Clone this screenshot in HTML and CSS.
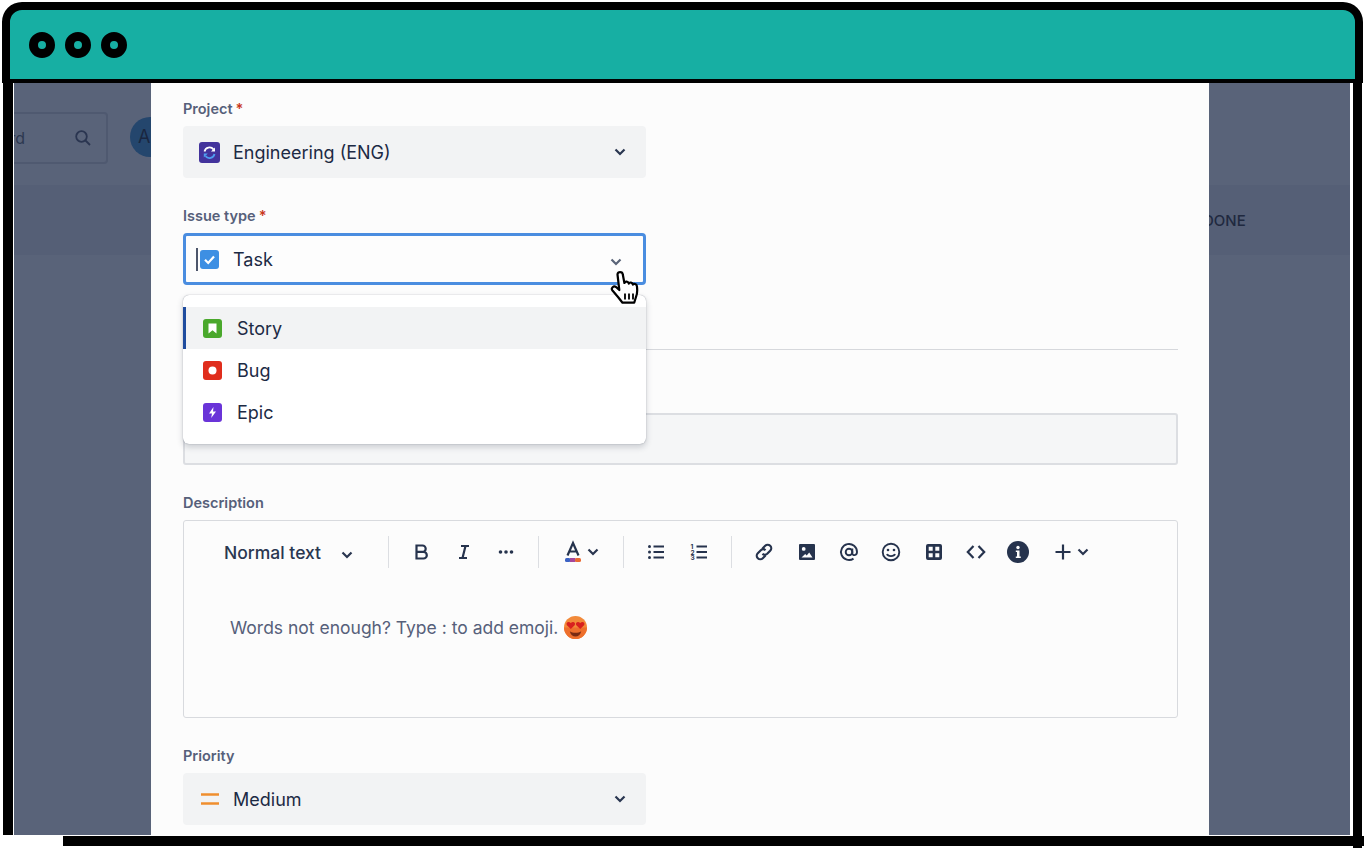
FILE: index.html
```html
<!DOCTYPE html>
<html lang="en">
<head>
<meta charset="utf-8">
<title>Create issue</title>
<link rel="stylesheet" href="styles.css">
</head>
<body>
<div class="window">
  <header class="titlebar">
    <span class="dot"></span><span class="dot"></span><span class="dot"></span>
  </header>
  <div class="stage">
    <aside class="backdrop backdrop-left">
      <div class="topbar">
        <div class="search">
          <span class="search-text">Search board</span>
          <svg class="search-icon" viewBox="0 0 18 18"><circle cx="7.5" cy="7.5" r="5.3"/><path d="M11.5 11.5 16 16"/></svg>
        </div>
        <div class="avatar">A</div>
      </div>
      <div class="band"></div>
    </aside>
    <main class="modal">
      <section class="field">
        <div class="label">Project<span class="req">*</span></div>
        <div class="select">
          <svg class="ico" viewBox="0 0 21 21"><rect width="21" height="21" rx="3" fill="#43339c"/><path d="M5.5 9.5a5.2 5.2 0 0 1 9-2.2" fill="none" stroke="#fff" stroke-width="1.8"/><path d="M16 5.5v4h-4z" fill="#fff"/><path d="M15.5 12a5.2 5.2 0 0 1-9 2.2" fill="none" stroke="#4f9df0" stroke-width="1.8"/><path d="M4.8 15.5v-4h4z" fill="#4f9df0"/></svg>
          <span class="value">Engineering (ENG)</span>
          <svg class="chev" viewBox="0 0 12 8"><path d="M1.5 1.5 6 6l4.500-4.500"/></svg>
        </div>
      </section>
      <section class="field field-issue">
        <div class="label">Issue type<span class="req">*</span></div>
        <div class="select select-focus">
          <span class="caret"></span>
          <svg class="ico ico-task" viewBox="0 0 19 19"><rect width="19" height="19" rx="3" fill="#3d8fe3"/><path d="M5 9.800 8.200 13 14 6.500" fill="none" stroke="#fff" stroke-width="2.200"/></svg>
          <span class="value">Task</span>
          <svg class="chev chev-soft" viewBox="0 0 12 8"><path d="M1.5 1.5 6 6l4.500-4.500"/></svg>
        </div>
        <div class="menu">
          <div class="menu-item menu-item-active">
            <svg class="menu-ico" viewBox="0 0 19 19"><rect width="19" height="19" rx="3" fill="#4aa82c"/><path d="M5.500 4.500h8v10l-4-3.200-4 3.200z" fill="#fff"/></svg>
            <span>Story</span>
          </div>
          <div class="menu-item">
            <svg class="menu-ico" viewBox="0 0 19 19"><rect width="19" height="19" rx="3" fill="#e02d1c"/><circle cx="9.500" cy="9.500" r="4" fill="#fff"/></svg>
            <span>Bug</span>
          </div>
          <div class="menu-item">
            <svg class="menu-ico" viewBox="0 0 19 19"><rect width="19" height="19" rx="3" fill="#6a34d8"/><path d="M10.500 4 6 10.500h3L8.200 15l4.800-6.500h-3z" fill="#fff"/></svg>
            <span>Epic</span>
          </div>
        </div>
      </section>
      <div class="divider"></div>
      <section class="field field-summary">
        <div class="label">Summary</div>
        <div class="textbox"></div>
      </section>
      <section class="field field-desc">
        <div class="label">Description</div>
        <div class="editor">
          <div class="toolbar">
            <div class="tb-style"><span>Normal text</span>
              <svg class="chev chev-dark" viewBox="0 0 12 8"><path d="M1.500 1.500 6 6l4.500-4.500"/></svg>
            </div>
            <span class="sep"></span>
            <div class="tb"><svg viewBox="0 0 20 20"><path class="s" d="M5.500 3.500h6a3.200 3.200 0 0 1 0 6.400h-6zM5.500 9.900h7a3.300 3.300 0 0 1 0 6.600h-7z"/></svg></div>
            <div class="tb"><svg viewBox="0 0 20 20"><path class="s" d="M7 4h8M5 16h8M11.500 4 8.500 16"/></svg></div>
            <div class="tb"><svg viewBox="0 0 20 20"><circle class="f" cx="4.500" cy="10" r="1.800"/><circle class="f" cx="10" cy="10" r="1.800"/><circle class="f" cx="15.500" cy="10" r="1.800"/></svg></div>
            <span class="sep"></span>
            <div class="tb tb-wide">
              <svg viewBox="0 0 20 24"><path class="s" d="M4.500 15.500 10 3l5.500 12.500M6.500 11.500h7"/><rect x="2" y="18" width="5.500" height="4" rx="1.500" fill="#3c62c4"/><rect x="7" y="18" width="5.500" height="4" fill="#a5479b"/><rect x="12" y="18" width="6" height="4" rx="1.500" fill="#ea6a33"/></svg>
              <svg class="chev chev-dark" viewBox="0 0 12 8"><path d="M1.500 1.500 6 6l4.500-4.500"/></svg>
            </div>
            <span class="sep"></span>
            <div class="tb"><svg viewBox="0 0 20 20"><circle class="f" cx="3.500" cy="4.500" r="1.500"/><circle class="f" cx="3.500" cy="10" r="1.500"/><circle class="f" cx="3.500" cy="15.500" r="1.500"/><path class="s" d="M7.500 4.500H18M7.500 10H18M7.500 15.500H18"/></svg></div>
            <div class="tb"><svg viewBox="0 0 20 20"><text x="1.500" y="7" class="n">1</text><text x="1.500" y="12.500" class="n">2</text><text x="1.500" y="18" class="n">3</text><path class="s" d="M7.500 4.500H18M7.500 10H18M7.500 15.500H18"/></svg></div>
            <span class="sep"></span>
            <div class="tb"><svg viewBox="0 0 20 20"><path class="s" d="M8.500 6.500 11.200 3.800a3.400 3.400 0 0 1 5 5l-3 3a3.400 3.400 0 0 1-4.700 0M11.500 13.500 8.800 16.200a3.400 3.400 0 0 1-5-5l3-3a3.400 3.400 0 0 1 4.700 0"/></svg></div>
            <div class="tb"><svg viewBox="0 0 20 20"><path class="f" fill-rule="evenodd" d="M3 2h14a1 1 0 0 1 1 1v14a1 1 0 0 1-1 1H3a1 1 0 0 1-1-1V3a1 1 0 0 1 1-1zM4.500 15.500h11l-3.300-5-2.500 3-1.500-1.500zM6.700 5a1.900 1.900 0 1 0 0 3.800 1.900 1.900 0 0 0 0-3.800z"/></svg></div>
            <div class="tb"><svg viewBox="0 0 20 20"><circle class="s2" cx="10" cy="10" r="3.300"/><path class="s2" d="M13.300 6.500v4.800c0 2.700 4.700 2.500 4.700-1.300a8 8 0 1 0-3.500 6.600"/></svg></div>
            <div class="tb"><svg viewBox="0 0 20 20"><circle class="s2" cx="10" cy="10" r="8.300"/><circle class="f" cx="7" cy="8" r="1.300"/><circle class="f" cx="13" cy="8" r="1.300"/><path class="s2" d="M6 12c1 2.800 7 2.800 8 0"/></svg></div>
            <div class="tb"><svg viewBox="0 0 20 20"><path class="f" fill-rule="evenodd" d="M4 2h12a2 2 0 0 1 2 2v12a2 2 0 0 1-2 2H4a2 2 0 0 1-2-2V4a2 2 0 0 1 2-2zM4.700 4.700v4h4v-4zM11.300 4.700v4h4v-4zM4.700 11.300v4h4v-4zM11.300 11.300v4h4v-4z"/></svg></div>
            <div class="tb"><svg viewBox="0 0 20 20"><path class="s" d="M7.500 4 1.800 10l5.700 6M12.500 4l5.700 6-5.700 6"/></svg></div>
            <div class="tb"><svg class="tb-big" viewBox="0 0 22 22"><circle class="f" cx="11" cy="11" r="11"/><circle cx="11" cy="6.500" r="1.700" fill="#fcfcfc"/><path d="M8.800 9.500H12.500V15.500H13.800V17H8.800V15.500H10V11H8.800z" fill="#fcfcfc"/></svg></div>
            <div class="tb tb-wide tb-plus">
              <svg viewBox="0 0 20 20"><path class="s" d="M10 2.500v15M2.500 10h15"/></svg>
              <svg class="chev chev-dark" viewBox="0 0 12 8"><path d="M1.500 1.500 6 6l4.500-4.500"/></svg>
            </div>
          </div>
          <div class="placeholder">
            <span>Words not enough? Type : to add emoji.</span>
            <svg class="emoji" viewBox="0 0 22 22"><circle cx="11" cy="11" r="11" fill="#f28a3a"/><path d="M11 22a11 11 0 0 0 11-11H0a11 11 0 0 0 11 11z" fill="#ee6f2c"/><path d="M6.500 12.500 2.800 8.800c-1.500-2 1.400-4.300 3.700-2 2.300-2.300 5.200 0 3.700 2zM15.500 12.500l-3.700-3.700c-1.500-2 1.400-4.300 3.700-2 2.300-2.300 5.200 0 3.700 2z" fill="#d8201f"/><path d="M5.500 14.500c3 2 8 2 11 0-.7 3.500-3 5-5.500 5s-4.800-1.500-5.500-5z" fill="#7a2b12"/></svg>
          </div>
        </div>
      </section>
      <section class="field field-priority">
        <div class="label">Priority</div>
        <div class="select">
          <svg class="ico ico-pri" viewBox="0 0 18 12"><path d="M0 1.500h18M0 10.500h18" stroke="#ef8e2e" stroke-width="2.400"/></svg>
          <span class="value">Medium</span>
          <svg class="chev" viewBox="0 0 12 8"><path d="M1.500 1.500 6 6l4.500-4.500"/></svg>
        </div>
      </section>
    </main>
    <aside class="backdrop backdrop-right">
      <div class="band band-right"><span>DONE</span></div>
    </aside>
  </div>
  <div class="frame-bottom"></div>
  <svg class="cursor" viewBox="0 0 34 40">
    <path d="M7.500 4.500c0-3.200 5-3.200 5.300 0l1.600 8.500c.8-2.200 4-1.800 4.400.6.800-1.800 3.700-1.300 4.100 1 1-1.300 3.700-.8 4 1.600.5 3.500.6 7.500-1 11l-1.700 5.500H12.500L8 27l-5.500-6.500c-2-2.500 1.200-5 3.500-3.500l3.300 3z" fill="#fff" stroke="#000" stroke-width="2.200" stroke-linejoin="round"/>
    <path d="M15 23.500v6M19 23.500v6M23 23.500v6" stroke="#000" stroke-width="1.800"/>
  </svg>
</div>
</body>
</html>
```
FILE: styles.css
```css
* { box-sizing: border-box; }
html, body { margin: 0; padding: 0; }
body {
  width: 1364px;
  height: 848px;
  overflow: hidden;
  background: #fff;
  font-family: "Inter", "Liberation Sans", sans-serif;
  color: #1c2a44;
}
.window { position: relative; width: 1364px; height: 848px; overflow: hidden; }

.titlebar {
  margin: 2px 1px 0 2px;
  height: 81px;
  display: flex;
  align-items: center;
  gap: 10px;
  padding-left: 19px;
  background: #17afa3;
  border: 8px solid #000;
  border-bottom-width: 4px;
  border-radius: 20px 20px 0 0;
}
.dot {
  width: 26px;
  height: 26px;
  border-radius: 50%;
  background: #17afa3;
  border: 9px solid #000;
}

.stage {
  display: flex;
  height: 752px;
  margin: 0 14px 0 3px;
  border-left: 10px solid #000;
  border-right: 0;
  padding-left: 1px;
  margin-right: 14px;
}
.stage::after { content: none; }

.backdrop {
  background: #596379;
  overflow: hidden;
  flex: none;
}
.backdrop-left { width: 137px; }
.backdrop-right { width: 141px; }

.topbar {
  height: 102px;
  display: flex;
  align-items: flex-start;
  padding-top: 29px;
}
.search {
  width: 94px;
  flex: none;
  height: 52px;
  display: flex;
  align-items: center;
  justify-content: flex-end;
  padding-right: 14px;
  gap: 49px;
  border: 2px solid #4f5970;
  border-left: 0;
  border-radius: 0 4px 4px 0;
}
.search-text {
  font-size: 16px;
  color: #2d3850;
  white-space: nowrap;
}
.search-icon { width: 18px; height: 18px; flex: none; fill: none; stroke: #2a3550; stroke-width: 1.800; }
.avatar {
  flex: none;
  width: 40px;
  height: 40px;
  margin: 5px 0 0 22px;
  border-radius: 50%;
  background: #24466d;
  color: #1a2640;
  font-size: 18px;
  line-height: 40px;
  padding-left: 8px;
}
.band { height: 70px; background: #555f76; }
.band-right {
  margin-top: 102px;
  display: flex;
  align-items: center;
  font-size: 15px;
  font-weight: 500;
  color: #20293f;
}
.band-right span { margin-left: -6px; }

.modal {
  width: 1058px;
  flex: none;
  background: #fcfcfc;
  padding: 16px 32px 0;
  overflow: hidden;
}
.label {
  height: 20px;
  line-height: 20px;
  margin-bottom: 7px;
  font-size: 14.500px;
  font-weight: 600;
  color: #56607a;
}
.req { color: #c9371b; margin-left: 3px; }

.select {
  position: relative;
  width: 463px;
  height: 52px;
  display: flex;
  align-items: center;
  background: #f2f3f4;
  border-radius: 4px;
  padding-left: 16px;
}
.ico { width: 21px; height: 21px; flex: none; }
.value { margin-left: 13px; font-size: 18px; color: #1c2a44; }
.chev {
  position: absolute;
  right: 20px;
  top: 22px;
  width: 12px;
  height: 8px;
  fill: none;
  stroke: #2a3650;
  stroke-width: 2.200;
}
.chev-soft { stroke: #5a6478; top: 22px; right: 21px; }

.field-issue { position: relative; margin-top: 28px; }
.select-focus {
  background: #fdfdfd;
  border: 3px solid #4a8de0;
  border-radius: 4px;
  padding-left: 10px;
}
.caret { width: 2px; height: 23px; background: #4d566b; flex: none; margin-right: 2px; }
.ico-task { width: 19px; height: 19px; }
.select-focus .value { margin-left: 14px; }

.menu {
  position: absolute;
  z-index: 2;
  left: 0;
  top: 89px;
  width: 463px;
  height: 149px;
  padding-top: 12px;
  background: #fff;
  border-radius: 6px;
  box-shadow: 0 0 1px rgba(40, 50, 70, .55), 0 3px 6px rgba(40, 50, 70, .22);
}
.menu-item {
  height: 42px;
  display: flex;
  align-items: center;
  gap: 15px;
  padding-left: 20px;
  font-size: 18px;
  color: #1c2a44;
}
.menu-item-active {
  background: #f2f3f4;
  box-shadow: inset 3px 0 0 #1f4c9e;
}
.menu-ico { width: 19px; height: 19px; flex: none; }

.divider { height: 1px; margin-top: 64px; width: 995px; background: #d6d8dc; }
.field-summary { margin-top: 36px; }
.textbox {
  width: 995px;
  height: 52px;
  background: #f5f6f7;
  border: 2px solid #dcdee2;
  border-radius: 3px;
}
.field-desc { margin-top: 28px; }
.editor {
  width: 995px;
  height: 198px;
  border: 1px solid #d8dade;
  border-radius: 3px;
}
.toolbar {
  display: flex;
  align-items: center;
  height: 30px;
  margin-top: 16px;
  padding-left: 40px;
  color: #26334d;
}
.tb-style {
  width: 153px;
  flex: none;
  position: relative;
  font-size: 17.500px;
  font-weight: 500;
  color: #2a3750;
}
.tb-style .chev { right: 24px; top: 9px; }
.sep { flex: none; width: 1px; height: 32px; margin: 0 11px; background: #dcdee2; }
.tb {
  flex: none;
  width: 42.400px;
  height: 30px;
  display: flex;
  align-items: center;
  justify-content: center;
}
.tb svg { width: 20px; height: 20px; }
.tb-big { width: 22px !important; height: 22px !important; }
.tb-wide { width: 62px; gap: 4px; }
.tb-wide svg:first-child { height: 24px; }
.tb .chev { position: static; width: 12px; height: 8px; }
.tb-plus { margin-left: 0; }
.tb-plus svg:first-child { height: 20px; }
.s { fill: none; stroke: #26334d; stroke-width: 2.200; }
.s2 { fill: none; stroke: #26334d; stroke-width: 1.900; }
.f { fill: #26334d; }
.n { font-size: 6.500px; font-weight: 700; fill: #26334d; }

.placeholder {
  display: flex;
  align-items: center;
  gap: 6px;
  margin: 49px 0 0 46px;
  font-size: 17.500px;
  color: #56607a;
}
.emoji { width: 23px; height: 23px; flex: none; }

.field-priority { margin-top: 28px; }
.ico-pri { width: 18px; height: 12px; margin-left: 2px; }
.field-priority .value { margin-left: 14px; }

.frame-bottom {
  position: absolute;
  left: 63px;
  top: 836px;
  width: 1301px;
  height: 10px;
  background: #000;
}
.window::before {
  content: "";
  position: absolute;
  left: 1353px;
  top: 83px;
  width: 9px;
  height: 765px;
  background: #000;
}
.cursor {
  position: absolute;
  left: 610px;
  top: 270px;
  width: 34px;
  height: 40px;
  z-index: 3;
}
```
